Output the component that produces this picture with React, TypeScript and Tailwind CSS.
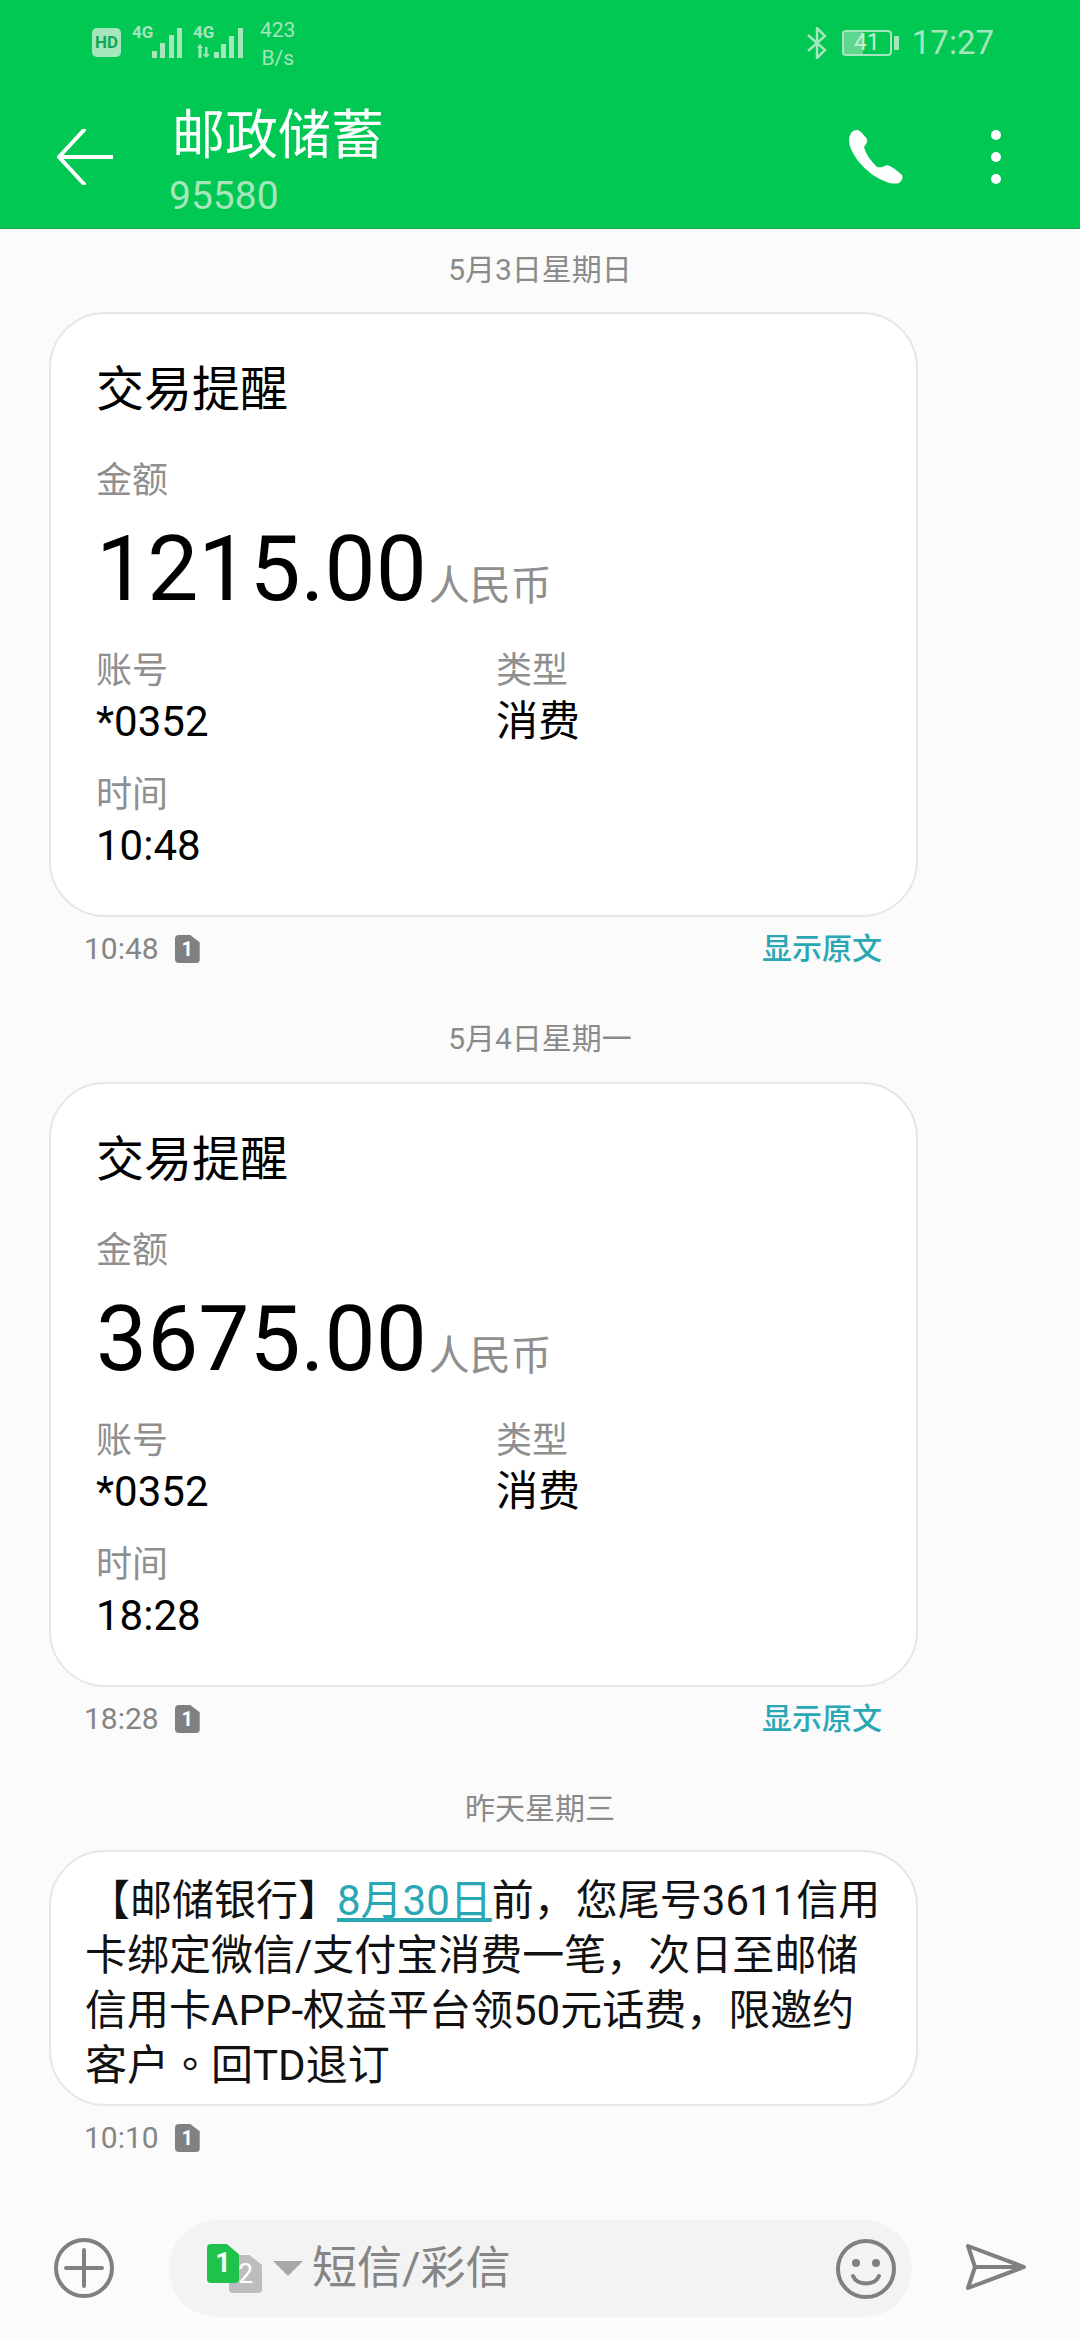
const cjk = "font-['Roboto','Noto_Sans_CJK_SC',sans-serif]";

function SimTag({ n, className }: { n: string; className: string }) {
  return (
    <span
      className={`flex items-center justify-center rounded-[4px] [clip-path:polygon(0_0,62%_0,100%_26%,100%_100%,0_100%)] text-white ${className}`}
    >
      {n}
    </span>
  );
}

function DateLabel({ text }: { text: string }) {
  return <div className="flex h-[32px] items-center justify-center text-[30px] text-[#8a8a8a]">{text}</div>;
}

function Field({ label, value }: { label: string; value: string }) {
  return (
    <div className="flex flex-col">
      <span className="h-[40px] text-[36px] leading-[40px] text-[#8f8f8f]">{label}</span>
      <span className="mt-[10px] h-[42px] text-[42px] leading-[42px] text-black">{value}</span>
    </div>
  );
}

function TxCard({ amount, time }: { amount: string; time: string }) {
  return (
    <div className="ml-[49px] flex h-[605px] w-[869px] flex-col rounded-[56px] border-2 border-[#e6e6e6] bg-white pt-[50px] pl-[45px]">
      <div className="h-[52px] text-[48px] leading-[52px] text-black">交易提醒</div>
      <div className="mt-[45px] h-[40px] text-[36px] leading-[40px] text-[#8f8f8f]">金额</div>
      <div className="mt-[23px] flex h-[90px] items-end">
        <span className="text-[91px] leading-[90px] text-black">{amount}</span>
        <span className="mb-[4px] ml-[2px] text-[41px] leading-[48px] text-[#8f8f8f]">人民币</span>
      </div>
      <div className="mt-[37px] grid grid-cols-[400px_1fr]">
        <Field label="账号" value="*0352" />
        <Field label="类型" value="消费" />
      </div>
      <div className="mt-[32px]">
        <Field label="时间" value={time} />
      </div>
    </div>
  );
}

function MetaRow({ time, showOriginal = true }: { time: string; showOriginal?: boolean }) {
  return (
    <div className="ml-[84px] mt-[14px] flex h-[36px] w-[798px] items-center justify-between">
      <div className="flex items-center">
        <span className="text-[30px] leading-[36px] text-[#858585]">{time}</span>
        <SimTag n="1" className="ml-[16px] h-[28px] w-[25px] bg-[#808080] text-[20px] font-bold" />
      </div>
      {showOriginal && <span className="text-[30px] leading-[36px] font-medium text-[#2aa7b5]">显示原文</span>}
    </div>
  );
}

function Signal({ arrows = false }: { arrows?: boolean }) {
  return (
    <svg width="50" height="30" viewBox="0 0 50 30" fill="#a5e6bd">
      {arrows ? (
        <>
          <path d="M4 20 7 16 10 20H8.500V30H5.500V20ZM12 19h2.500v7H17L13.250 30 9.500 26H12Z" />
          <rect x="21" y="24" width="5" height="6" />
          <rect x="28" y="16" width="5" height="14" />
          <rect x="36" y="8" width="5" height="22" />
          <rect x="45" y="0" width="5" height="30" />
        </>
      ) : (
        <>
          <rect x="20" y="23" width="5" height="7" />
          <rect x="28" y="15" width="5" height="15" />
          <rect x="37" y="7" width="5" height="23" />
          <rect x="45" y="0" width="5" height="30" />
        </>
      )}
    </svg>
  );
}

export default function App() {
  return (
    <div className={`flex h-[2340px] w-[1080px] flex-col overflow-hidden bg-[#fbfbfb] ${cjk}`}>
      <header className="h-[229px] shrink-0 border-b border-[#1aa350] bg-[#00c853]">
        <div className="flex h-[83px] items-center justify-between pr-[86px] pl-[92px] pt-[2px]">
          <div className="flex items-center">
            <span className="flex h-[29px] w-[29px] items-center justify-center rounded-[5px] bg-[#a5e6bd] text-[17px] font-bold text-[#12a850]">
              HD
            </span>
            <div className="relative ml-[11px] h-[30px] w-[50px]">
              <span className="absolute top-[-4px] left-0 text-[17px] leading-[17px] font-bold text-[#a5e6bd]">4G</span>
              <Signal />
            </div>
            <div className="relative ml-[11px] h-[30px] w-[50px]">
              <span className="absolute top-[-4px] left-0 text-[17px] leading-[17px] font-bold text-[#a5e6bd]">4G</span>
              <Signal arrows />
            </div>
            <div className="ml-[17px] flex flex-col items-center pt-[2px] text-[21px] leading-[28px] text-[#a5e6bd]">
              <span>423</span>
              <span>B/s</span>
            </div>
          </div>
          <div className="flex items-center">
            <svg width="20" height="32" viewBox="0 0 20 32" fill="none" stroke="#a5e6bd" strokeWidth="2.500">
              <path d="M1 8 18 23 10 31V1l8 8L1 24" />
            </svg>
            <div className="ml-[15px] flex h-[26px] w-[50px] items-center justify-center rounded-[4px] border-2 border-[#a5e6bd] bg-[linear-gradient(90deg,#5fd68d_42%,transparent_42%)] text-[23px] leading-none text-[#c4f0d4]">
              41
            </div>
            <span className="ml-[2px] h-[14px] w-[5px] rounded-[1px] bg-[#a5e6bd]" />
            <span className="ml-[13px] text-[33px] leading-none text-[#a5e6bd]">17:27</span>
          </div>
        </div>
        <div className="flex h-[145px] items-start">
          <svg className="mt-[46px] ml-[57px]" width="56" height="56" viewBox="0 0 56 56" fill="none" stroke="white" strokeWidth="4" strokeLinecap="round">
            <path d="M55 28H2M27 1 2 28l25 27" />
          </svg>
          <div className="mt-[24px] ml-[59px] flex flex-col">
            <span className="h-[58px] text-[53px] leading-[58px] text-white">邮政储蓄</span>
            <span className="mt-[9px] ml-[-3px] text-[39px] leading-[44px] text-[#a5e6bd]">95580</span>
          </div>
          <svg className="mt-[47px] ml-auto" width="55" height="54" viewBox="0 0 55 54" fill="white">
            <path d="M2 3Q4 0 9 0 12 1 18 9 19 12 15 17 17 26 28 37 33 38 38 35 43 36 53 45 55 49 50 53 46 54 40 53 22 47 9 31 0 18 0 11 0 6 2 3Z" />
          </svg>
          <div className="mt-[47px] mr-[79px] ml-[87px] flex flex-col gap-[12px]">
            <span className="h-[10px] w-[10px] rounded-full bg-white" />
            <span className="h-[10px] w-[10px] rounded-full bg-white" />
            <span className="h-[10px] w-[10px] rounded-full bg-white" />
          </div>
        </div>
      </header>

      <main className="flex flex-1 flex-col">
        <div className="mt-[24px]">
          <DateLabel text="5月3日星期日" />
        </div>
        <div className="mt-[27px]">
          <TxCard amount="1215.00" time="10:48" />
        </div>
        <MetaRow time="10:48" />
        <div className="mt-[55px]">
          <DateLabel text="5月4日星期一" />
        </div>
        <div className="mt-[28px]">
          <TxCard amount="3675.00" time="18:28" />
        </div>
        <MetaRow time="18:28" />
        <div className="mt-[55px]">
          <DateLabel text="昨天星期三" />
        </div>
        <div className="mt-[26px] ml-[49px] h-[256px] w-[869px] rounded-[56px] border-2 border-[#e6e6e6] bg-white pt-[21px] pl-[34px] text-[42px] leading-[55px] text-[#111]">
          <span className="ml-[3px]">【邮储银行】</span>
          <span className="ml-[-3px] text-[#2aa7b5] underline underline-offset-[3px]">8月30日</span>前，您尾号3611信用
          <br />
          卡绑定微信/支付宝消费一笔，次日至邮储
          <br />
          信用卡APP-权益平台领50元话费，限邀约
          <br />
          客户<span className="font-['Noto_Sans_CJK_TC'] leading-none">。</span>回TD退订
        </div>
        <MetaRow time="10:10" showOriginal={false} />
      </main>

      <footer className="flex h-[120px] shrink-0 items-start">
        <svg className="mt-[18px] ml-[54px]" width="60" height="60" viewBox="0 0 60 60" fill="none" stroke="#808080" strokeWidth="4" strokeLinecap="round">
          <circle cx="30" cy="30" r="28" />
          <path d="M30 12v36M12 30h36" />
        </svg>
        <div className="ml-[55px] flex h-[97px] w-[743px] items-center rounded-[48px] bg-[#f3f3f3] pl-[38px]">
          <div className="relative h-[49px] w-[55px]">
            <SimTag n="2" className="absolute top-[11px] left-[22px] h-[38px] w-[33px] bg-[#bdbdbd] text-[27px]" />
            <SimTag n="1" className="absolute top-0 left-0 h-[39px] w-[32px] bg-[#1fc24a] text-[27px] font-bold" />
          </div>
          <svg className="ml-[11px]" width="30" height="15" viewBox="0 0 30 15" fill="#a8a8a8">
            <path d="M0 0h30L15 15Z" />
          </svg>
          <span className="ml-[9px] text-[45px] leading-none text-[#858585]">短信/彩信</span>
          <svg className="mr-[16px] ml-auto" width="60" height="60" viewBox="0 0 60 60" fill="none" stroke="#808080" strokeWidth="4" strokeLinecap="round">
            <circle cx="30" cy="30" r="28" />
            <circle cx="20" cy="24" r="2" fill="#808080" />
            <circle cx="40" cy="24" r="2" fill="#808080" />
            <path d="M17 37c4 10 22 10 26 0" />
          </svg>
        </div>
        <svg className="mt-[23px] ml-[53px]" width="62" height="48" viewBox="0 0 62 48" fill="none" stroke="#808080" strokeWidth="4" strokeLinejoin="round">
          <path d="M3 3 59 24 3 45 10 24Z" />
          <path d="M10 24H59" />
        </svg>
      </footer>
    </div>
  );
}
